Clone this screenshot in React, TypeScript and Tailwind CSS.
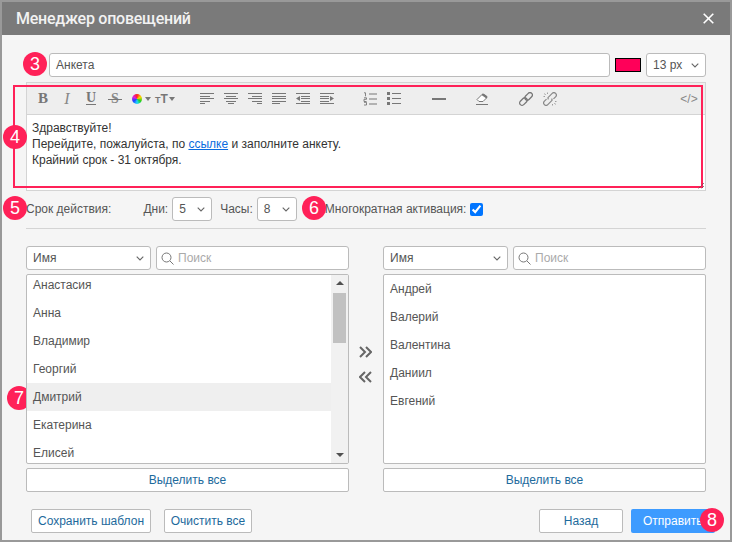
import React from "react";

const Chevron = () => (
  <svg width="8" height="5" viewBox="0 0 8 5" className="shrink-0">
    <path d="M.7.7L4 4 7.3.7" fill="none" stroke="#666" strokeWidth="1.1" />
  </svg>
);

function Sel({ label, className }: { label: string; className: string }) {
  return (
    <div className={`flex items-center justify-between bg-white border border-[#bbb] rounded-[3px] pl-[6px] pr-[6px] ${className}`}>
      <span className="text-[#555]">{label}</span>
      <Chevron />
    </div>
  );
}

const Caret = () => (
  <svg width="6" height="4" viewBox="0 0 6 4" className="shrink-0"><path d="M0 0h6L3 4z" fill="#777" /></svg>
);

function Lines({ rows }: { rows: [number, number][] }) {
  const ys = [0, 3, 5, 8, 10];
  return (
    <svg width="14" height="11" viewBox="0 0 14 11" shapeRendering="crispEdges">
      {rows.map(([x, w], i) => (
        <rect key={i} x={x} y={ys[i]} width={w} height="1" fill="#777" />
      ))}
    </svg>
  );
}

function Btn({ children, className = "" }: { children: React.ReactNode; className?: string }) {
  return <div className={`w-[24px] h-[24px] flex items-center justify-center ${className}`}>{children}</div>;
}

function Toolbar() {
  return (
    <div className="h-[32px] shrink-0 flex items-center bg-[#eeeeee] border-b border-[#d4d4d4] pl-[4px] pr-[4px]">
      <Btn><span className="font-bold text-[15px] leading-none text-[#777] [font-family:'Liberation_Serif',serif]">B</span></Btn>
      <Btn><span className="italic text-[16px] leading-none text-[#888] [font-family:'Liberation_Serif',serif]">I</span></Btn>
      <Btn><span className="font-bold text-[14px] leading-[12px] text-[#777] border-b border-[#777] [font-family:'Liberation_Serif',serif]">U</span></Btn>
      <Btn>
        <span className="relative font-bold text-[14px] leading-none text-[#888] [font-family:'Liberation_Serif',serif]">
          S
          <span className="absolute left-[-3px] right-[-3px] top-[7px] h-px bg-[#777]" />
        </span>
      </Btn>
      <Btn className="gap-[3px]">
        <span className="w-[10px] h-[10px] rounded-full bg-[conic-gradient(#ff2020,#ffd800,#20d020,#20d8ff,#2040ff,#e020e0,#ff2020)] ml-[4px]" />
        <Caret />
      </Btn>
      <Btn className="gap-[1px] ml-[2px]">
        <span className="font-bold text-[#777] text-[12px] leading-none"><span className="text-[9px]">T</span>T</span>
        <Caret />
      </Btn>
      <div className="flex ml-[18px]">
        <Btn><Lines rows={[[0, 14], [0, 10], [0, 14], [0, 10], [0, 5]]} /></Btn>
        <Btn><Lines rows={[[0, 14], [2, 10], [0, 14], [2, 10], [4, 6]]} /></Btn>
        <Btn><Lines rows={[[0, 14], [4, 10], [0, 14], [4, 10], [9, 5]]} /></Btn>
        <Btn><Lines rows={[[0, 14], [0, 14], [0, 14], [0, 14], [0, 8]]} /></Btn>
        <Btn>
          <svg width="14" height="11" viewBox="0 0 14 11" shapeRendering="crispEdges">
            <rect y="0" width="14" height="1" fill="#777" /><rect x="5" y="3" width="9" height="1" fill="#777" /><rect x="5" y="5" width="9" height="1" fill="#777" /><rect x="5" y="8" width="9" height="1" fill="#777" /><rect y="10" width="14" height="1" fill="#777" />
            <path d="M4 3v5L0 5.5z" fill="#777" shapeRendering="auto" />
          </svg>
        </Btn>
        <Btn>
          <svg width="14" height="11" viewBox="0 0 14 11" shapeRendering="crispEdges">
            <rect y="0" width="14" height="1" fill="#777" /><rect y="3" width="9" height="1" fill="#777" /><rect y="5" width="9" height="1" fill="#777" /><rect y="8" width="9" height="1" fill="#777" /><rect y="10" width="14" height="1" fill="#777" />
            <path d="M10 3v5L14 5.5z" fill="#777" shapeRendering="auto" />
          </svg>
        </Btn>
      </div>
      <div className="flex ml-[19px]">
        <Btn>
          <svg width="14" height="14" viewBox="0 0 14 14">
            <path d="M1 .8h1.5v3.5M1 5.8h2.5v1.5H1V9.5h2.5M1 10.3h2.5V13H1" fill="none" stroke="#777" strokeWidth="0.9" />
            <path d="M6 2h8M6 7h8M6 12h8" stroke="#777" strokeWidth="1" />
          </svg>
        </Btn>
        <Btn>
          <svg width="14" height="13" viewBox="0 0 14 13" shapeRendering="crispEdges">
            <rect x="0" y="0" width="3" height="3" fill="#777" /><rect x="0" y="5" width="3" height="3" fill="#777" /><rect x="0" y="10" width="3" height="3" fill="#777" />
            <rect x="5" y="1" width="9" height="1" fill="#777" /><rect x="5" y="6" width="9" height="1" fill="#777" /><rect x="5" y="11" width="9" height="1" fill="#777" />
          </svg>
        </Btn>
      </div>
      <Btn className="ml-[21px]"><div className="w-[14px] h-[2px] bg-[#777]" /></Btn>
      <Btn className="ml-[19px]">
        <svg width="14" height="12" viewBox="0 0 14 12">
          <path d="M2 6.5l5-5q1-1 2 0l2.5 1.5q1 1 0 2L8 8.5H4z" fill="#fff" stroke="#777" strokeWidth="1" />
          <path d="M6.5 2l4.9 3.6.5-.6q.7-1.1-.2-2L9 1.2q-1-.8-2 0z" fill="#777" />
          <path d="M1 11.5h12" stroke="#777" strokeWidth="1" />
        </svg>
      </Btn>
      <Btn className="ml-[20px]">
        <svg width="14" height="14" viewBox="0 0 14 14" fill="none" stroke="#777" strokeWidth="1.3">
          <g transform="rotate(-45 7 7)">
            <rect x="-1" y="4.6" width="8.6" height="4.8" rx="2.4" />
            <rect x="6.4" y="4.6" width="8.6" height="4.8" rx="2.4" />
          </g>
        </svg>
      </Btn>
      <Btn>
        <svg width="14" height="14" viewBox="0 0 14 14" fill="none" stroke="#888" strokeWidth="1.2">
          <g transform="rotate(-45 7 7)">
            <path d="M4.5 4.6h-3a2.4 2.4 0 0 0 0 4.8h6a2.4 2.4 0 0 0 .8-1.5" />
            <path d="M9.5 9.4h3a2.4 2.4 0 0 0 0-4.8h-6a2.4 2.4 0 0 0-.8 1.5" />
          </g>
          <path d="M1.5 1.5l1 1.5M4.5.5v1.5M.5 4.5H2M12.5 12.5l-1-1.5M9.5 13.5V12M13.5 9.5H12" strokeWidth="0.8" />
        </svg>
      </Btn>
      <span className="ml-auto text-[#888] text-[12px] w-[24px] text-center">&lt;/&gt;</span>
    </div>
  );
}

function Circle({ n, className }: { n: number; className: string }) {
  return (
    <div className={`absolute w-[24px] h-[24px] rounded-full bg-[#ff2158] text-white text-[18px] leading-[24px] text-center ${className}`}>{n}</div>
  );
}

function ListPanel({ items, scrolled }: { items: string[]; scrolled?: boolean }) {
  return (
    <div className="w-[323px] flex flex-col gap-[4px]">
      <div className="flex gap-[5px] h-[24px]">
        <Sel label="Имя" className="w-[125px]" />
        <div className="flex-1 flex items-center gap-[4px] bg-white border border-[#bbb] rounded-[3px] pl-[4px]">
          <svg width="13" height="13" viewBox="0 0 13 13" fill="none" stroke="#777" strokeWidth="1">
            <circle cx="5.5" cy="5.5" r="4.5" /><path d="M9 9l3.5 3.5" />
          </svg>
          <span className="text-[#aaa]">Поиск</span>
        </div>
      </div>
      <div className="relative z-10 h-[190px] bg-white border border-[#bbb] rounded-[2px] overflow-hidden flex">
        <div className={`flex-1 flex flex-col ${scrolled ? "-mt-[4px]" : ""}`}>
          {items.map((t) => (
            <div key={t} className={`h-[28px] shrink-0 leading-[28px] pl-[6px] text-[#555] ${t === "Дмитрий" ? "bg-[#efefef]" : ""}`}>{t}</div>
          ))}
        </div>
        {scrolled && (
          <div className="w-[17px] bg-[#f1f1f1] flex flex-col items-center justify-between py-[6px] relative">
            <svg width="8" height="4" viewBox="0 0 8 4"><path d="M0 4h8L4 0z" fill="#505050" /></svg>
            <div className="absolute left-[2px] top-[18px] w-[13px] h-[50px] bg-[#c1c1c1]" />
            <svg width="8" height="4" viewBox="0 0 8 4"><path d="M0 0h8L4 4z" fill="#505050" /></svg>
          </div>
        )}
      </div>
      <div className="h-[24px] bg-white border border-[#bbb] rounded-[2px] flex items-center justify-center text-[#1d6a9c]">Выделить все</div>
    </div>
  );
}

export default function App() {
  return (
    <div className="relative w-[732px] h-[542px] border-2 border-[#999] bg-[#f5f5f5] text-[12px] [font-family:'Liberation_Sans',Arial,sans-serif] overflow-hidden flex flex-col">
      <div className="h-[33px] shrink-0 bg-[#7a7a7a] flex items-center justify-between pl-[14px] pr-[16px] text-white">
        <span className="text-[16px] font-medium tracking-[-0.25px] text-[#f2f2f2] [font-family:Roboto,sans-serif]">Менеджер оповещений</span>
        <svg width="11" height="11" viewBox="0 0 11 11"><path d="M.7.7l9.6 9.6M10.3.7L.7 10.3" stroke="#fff" strokeWidth="1.6" /></svg>
      </div>

      <div className="flex-1 flex flex-col pl-[24px] pr-[24px]">
        <div className="flex items-center h-[24px] mt-[18px] ml-[23px]">
          <div className="flex-1 h-[24px] bg-white border border-[#bbb] rounded-[3px] pl-[6px] leading-[22px] text-[#555]">Анкета</div>
          <div className="w-[26px] h-[14px] ml-[5px] bg-[#ff0059] border border-black" />
          <Sel label="13 px" className="w-[60px] h-[24px] ml-[5px]" />
        </div>

        <div className="mt-[5px] h-[109px] border border-[#d4d4d4] bg-white">
          <Toolbar />
          <div className="pl-[5px] pt-[5px] text-[#333] leading-[16px]">
            <div>Здравствуйте!</div>
            <div>Перейдите, пожалуйста, по <span className="text-[#0a6cde] underline">ссылке</span> и заполните анкету.</div>
            <div>Крайний срок - 31 октября.</div>
          </div>
        </div>

        <div className="flex items-center h-[24px] mt-[6px] text-[#555]">
          <span>Срок действия:</span>
          <span className="ml-[32px]">Дни:</span>
          <Sel label="5" className="w-[40px] h-[24px] ml-[4px]" />
          <span className="ml-[8px]">Часы:</span>
          <Sel label="8" className="w-[40px] h-[24px] ml-[4px]" />
          <span className="ml-[28px]">Многократная активация:</span>
          <input type="checkbox" checked readOnly className="w-[13px] h-[13px] ml-[4px] accent-[#0075ff]" />
        </div>

        <div className="h-px bg-[#d4d4d4] mt-[7px]" />

        <div className="flex mt-[17px] justify-between items-start">
          <ListPanel scrolled items={["Анастасия", "Анна", "Владимир", "Георгий", "Дмитрий", "Екатерина", "Елисей"]} />
          <div className="flex flex-col items-center gap-[13px] mt-[100px] mr-[2px]">
            <svg width="13" height="12" viewBox="0 0 13 12" fill="none" stroke="#666" strokeWidth="2"><path d="M1 1l5 5-5 5M7 1l5 5-5 5" /></svg>
            <svg width="13" height="12" viewBox="0 0 13 12" fill="none" stroke="#666" strokeWidth="2"><path d="M6 1L1 6l5 5M12 1L7 6l5 5" /></svg>
          </div>
          <ListPanel items={["Андрей", "Валерий", "Валентина", "Даниил", "Евгений"]} />
        </div>

        <div className="flex items-center mt-[17px] h-[24px] text-[#1d6a9c]">
          <div className="ml-[5px] w-[120px] h-[24px] bg-white border border-[#bbb] rounded-[2px] flex items-center justify-center">Сохранить шаблон</div>
          <div className="ml-[13px] w-[88px] h-[24px] bg-white border border-[#bbb] rounded-[2px] flex items-center justify-center">Очистить все</div>
          <div className="ml-auto w-[84px] h-[24px] bg-white border border-[#bbb] rounded-[2px] flex items-center justify-center">Назад</div>
          <div className="ml-[8px] w-[84px] mr-[-9px] h-[24px] bg-[#3d9bff] text-white rounded-[2px] flex items-center pl-[12px]">Отправить</div>
        </div>
      </div>

      <div className="absolute left-[11px] top-[83px] w-[690px] h-[103px] border-2 border-[#ff2158]" />
      <svg width="7" height="7" viewBox="0 0 7 7" className="absolute left-[695px] top-[180px]" fill="none" stroke="#555" strokeWidth="1" strokeDasharray="1 1">
        <path d="M7 1L1 7M7 4L4 7" />
      </svg>
      <Circle n={3} className="left-[21px] top-[50px]" />
      <Circle n={4} className="left-[1px] top-[123px]" />
      <Circle n={5} className="left-[1px] top-[194px]" />
      <Circle n={6} className="left-[300px] top-[194px]" />
      <Circle n={7} className="left-[5px] top-[384px]" />
      <Circle n={8} className="left-[698px] top-[506px]" />
    </div>
  );
}
